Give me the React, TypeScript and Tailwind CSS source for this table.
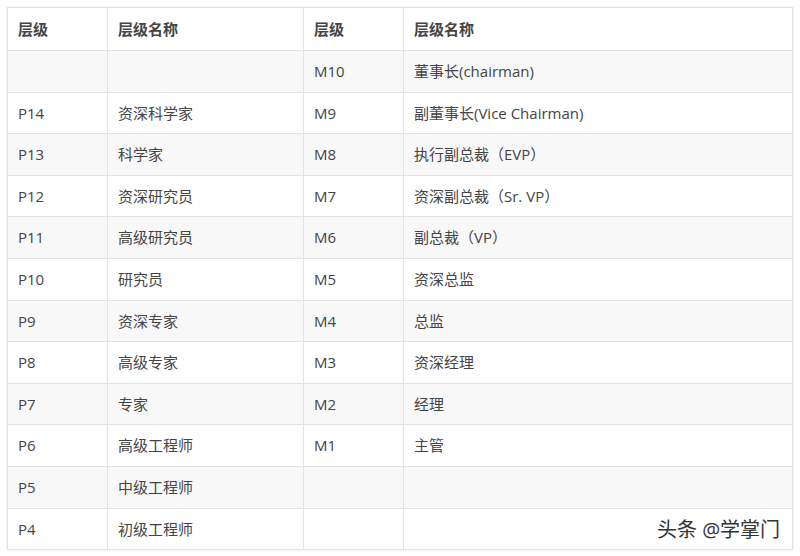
const rows: [string, string, string, string][] = [
  ["", "", "M10", "董事长(chairman)"],
  ["P14", "资深科学家", "M9", "副董事长(Vice Chairman)"],
  ["P13", "科学家", "M8", "执行副总裁（EVP）"],
  ["P12", "资深研究员", "M7", "资深副总裁（Sr. VP）"],
  ["P11", "高级研究员", "M6", "副总裁（VP）"],
  ["P10", "研究员", "M5", "资深总监"],
  ["P9", "资深专家", "M4", "总监"],
  ["P8", "高级专家", "M3", "资深经理"],
  ["P7", "专家", "M2", "经理"],
  ["P6", "高级工程师", "M1", "主管"],
  ["P5", "中级工程师", "", ""],
  ["P4", "初级工程师", "", ""],
]

const cell = "border border-[#e3e3e3] px-[10px] text-left align-middle"

export default function App() {
  return (
    <div
      className="relative w-[800px] h-[556px] bg-white pt-[7px] pl-[7px] text-[15px] text-[#444]"
      style={{ fontFamily: '"Open Sans", "Noto Sans CJK SC", sans-serif' }}
    >
      <table className="w-[786px] border-collapse table-fixed shadow-[0_0_2px_rgba(0,0,0,0.12)]">
        <colgroup>
          <col className="w-[100px]" />
          <col className="w-[196px]" />
          <col className="w-[100px]" />
          <col />
        </colgroup>
        <thead>
          <tr className="h-[43px]">
            <th className={cell + " font-bold"}>层级</th>
            <th className={cell + " font-bold"}>层级名称</th>
            <th className={cell + " font-bold"}>层级</th>
            <th className={cell + " font-bold"}>层级名称</th>
          </tr>
        </thead>
        <tbody>
          {rows.map((r, i) => (
            <tr key={i} className={i % 2 === 0 ? "h-[41.6px] bg-[#f8f8f8]" : "h-[41.6px] bg-white"}>
              {r.map((c, j) => (
                <td key={j} className={cell}>
                  {c}
                </td>
              ))}
            </tr>
          ))}
        </tbody>
      </table>
      <div className="absolute left-[657px] top-[515px] text-[20px] text-[#333] tracking-[0px] [text-shadow:0_0_2px_#fff,1px_1px_1px_#fff]">
        头条 @学掌门
      </div>
    </div>
  )
}
